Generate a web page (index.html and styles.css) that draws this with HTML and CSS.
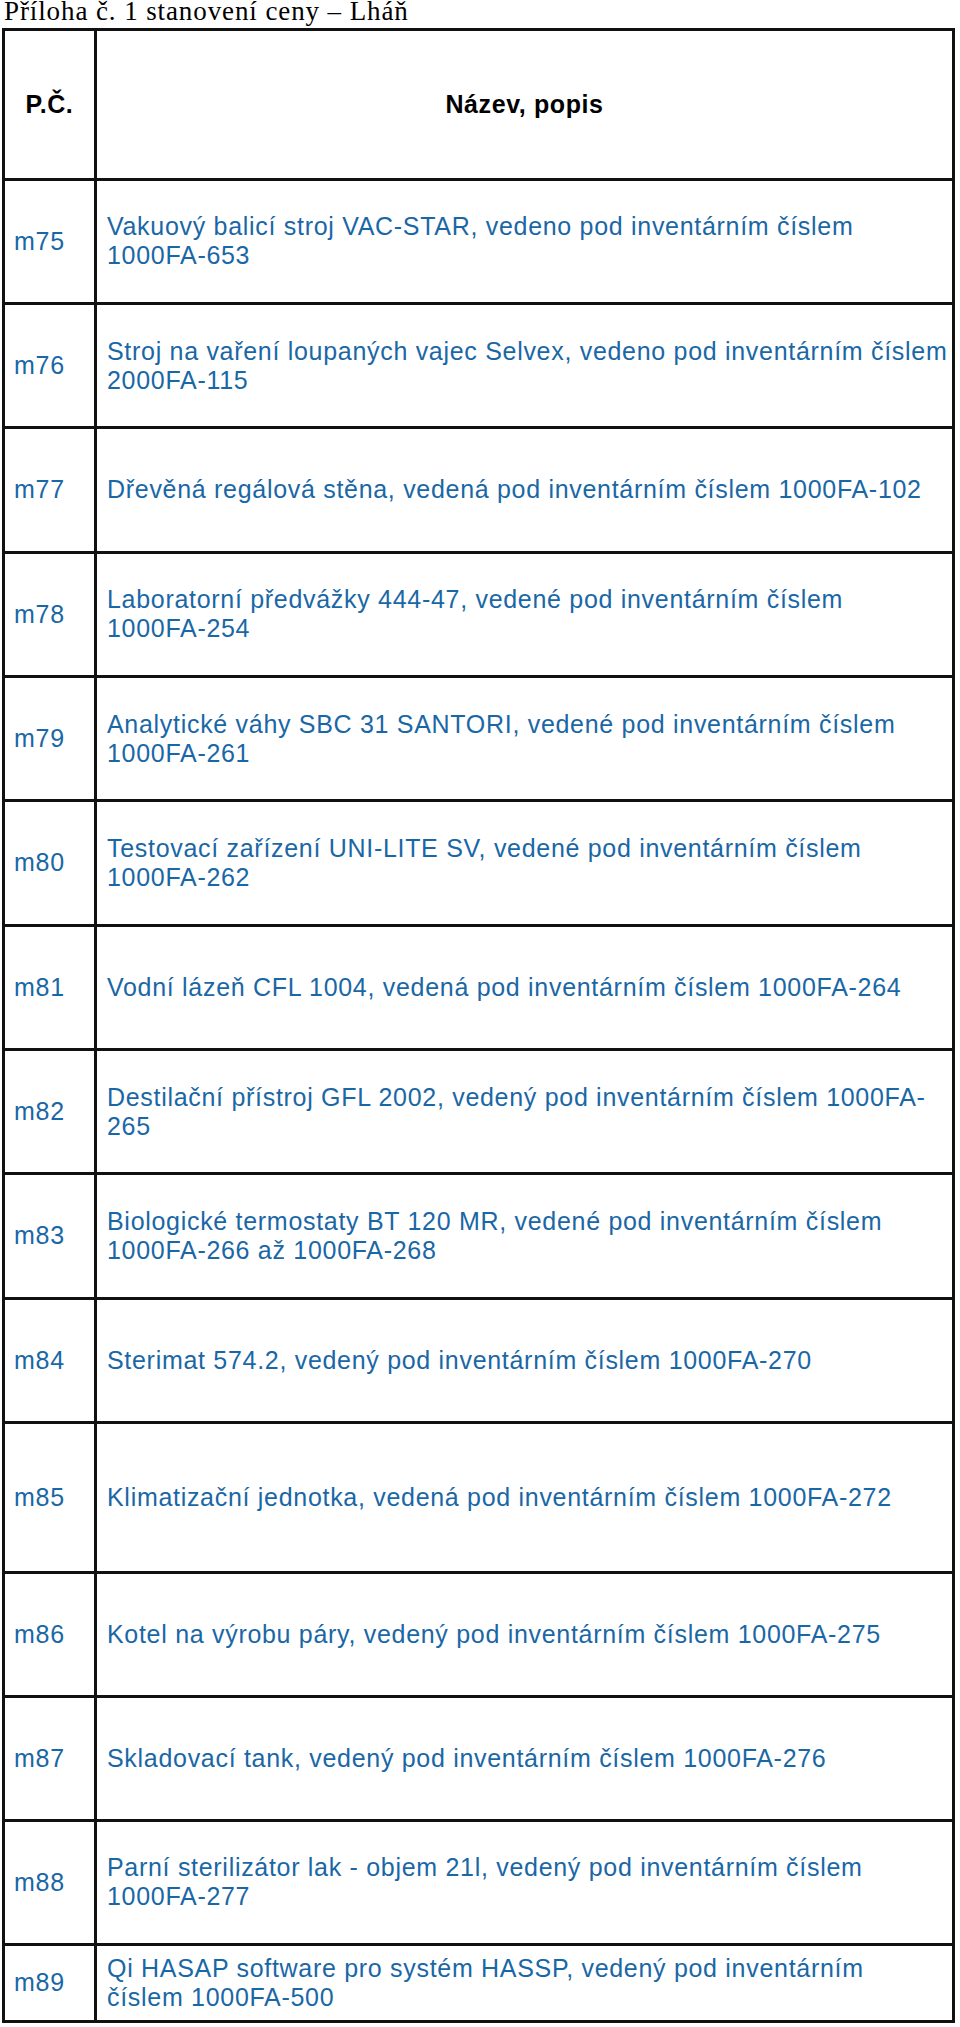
FILE: index.html
```html
<!DOCTYPE html>
<html lang="cs">
<head>
<meta charset="utf-8">
<title>Příloha č. 1 stanovení ceny – Lháň</title>
<link rel="stylesheet" href="styles.css">
</head>
<body>
<p class="title">Příloha č. 1 stanovení ceny – Lháň</p>
<div class="sheet">
  <div class="row head">
    <div class="no">P.Č.</div>
    <div class="desc">Název, popis</div>
  </div>
  <div class="row"><div class="no">m75</div><div class="desc"><span>Vakuový balicí stroj VAC-STAR, vedeno pod inventárním číslem<br>1000FA-653</span></div></div>
  <div class="row"><div class="no">m76</div><div class="desc"><span>Stroj na vaření loupaných vajec Selvex, vedeno pod inventárním číslem<br>2000FA-115</span></div></div>
  <div class="row"><div class="no">m77</div><div class="desc"><span>Dřevěná regálová stěna, vedená pod inventárním číslem 1000FA-102</span></div></div>
  <div class="row"><div class="no">m78</div><div class="desc"><span>Laboratorní předvážky 444-47, vedené pod inventárním číslem<br>1000FA-254</span></div></div>
  <div class="row"><div class="no">m79</div><div class="desc"><span>Analytické váhy SBC 31 SANTORI, vedené pod inventárním číslem<br>1000FA-261</span></div></div>
  <div class="row"><div class="no">m80</div><div class="desc"><span>Testovací zařízení UNI-LITE SV, vedené pod inventárním číslem<br>1000FA-262</span></div></div>
  <div class="row"><div class="no">m81</div><div class="desc"><span>Vodní lázeň CFL 1004, vedená pod inventárním číslem 1000FA-264</span></div></div>
  <div class="row"><div class="no">m82</div><div class="desc"><span>Destilační přístroj GFL 2002, vedený pod inventárním číslem 1000FA-<br>265</span></div></div>
  <div class="row"><div class="no">m83</div><div class="desc"><span>Biologické termostaty BT 120 MR, vedené pod inventárním číslem<br>1000FA-266 až 1000FA-268</span></div></div>
  <div class="row"><div class="no">m84</div><div class="desc"><span>Sterimat 574.2, vedený pod inventárním číslem 1000FA-270</span></div></div>
  <div class="row tall"><div class="no">m85</div><div class="desc"><span>Klimatizační jednotka, vedená pod inventárním číslem 1000FA-272</span></div></div>
  <div class="row short"><div class="no">m86</div><div class="desc"><span>Kotel na výrobu páry, vedený pod inventárním číslem 1000FA-275</span></div></div>
  <div class="row short"><div class="no">m87</div><div class="desc"><span>Skladovací tank, vedený pod inventárním číslem 1000FA-276</span></div></div>
  <div class="row short"><div class="no">m88</div><div class="desc"><span>Parní sterilizátor lak - objem 21l, vedený pod inventárním číslem<br>1000FA-277</span></div></div>
  <div class="row last"><div class="no">m89</div><div class="desc"><span>Qi HASAP software pro systém HASSP, vedený pod inventárním<br>číslem 1000FA-500</span></div></div>
</div>
</body>
</html>
```

FILE: styles.css
```css
html, body {
  margin: 0;
  padding: 0;
  background: #ffffff;
}

.title {
  margin: 0;
  padding: 0 0 5px 4px;
  font-family: "Liberation Serif", "Times New Roman", serif;
  font-size: 27px;
  letter-spacing: 0.9px;
  line-height: 23px;
  color: #000;
  white-space: nowrap;
}

.sheet {
  margin-left: 2px;
  width: 953px;
  box-sizing: border-box;
  border: 3px solid #111;
  border-bottom: none;
  font-family: "Liberation Sans", Arial, sans-serif;
  font-size: 25px;
  letter-spacing: 0.7px;
  line-height: 29px;
  color: #1a67a6;
}

.row {
  display: grid;
  grid-template-columns: 92px 1fr;
  box-sizing: border-box;
  height: 124.35px;
  border-bottom: 3px solid #111;
}

.row.head {
  height: 149.5px;
  color: #000;
  font-weight: bold;
  letter-spacing: 0.6px;
}

.row.tall {
  height: 150px;
}

.row.short {
  height: 124px;
}

.row.last {
  height: 77px;
}

.no {
  display: flex;
  align-items: center;
  box-sizing: border-box;
  padding-left: 9px;
  border-right: 3px solid #111;
  white-space: nowrap;
}

.desc {
  display: flex;
  align-items: center;
  box-sizing: border-box;
  padding-left: 10px;
  white-space: nowrap;
  overflow: hidden;
}

.head .no,
.head .desc {
  justify-content: center;
  padding-left: 0;
}
```
